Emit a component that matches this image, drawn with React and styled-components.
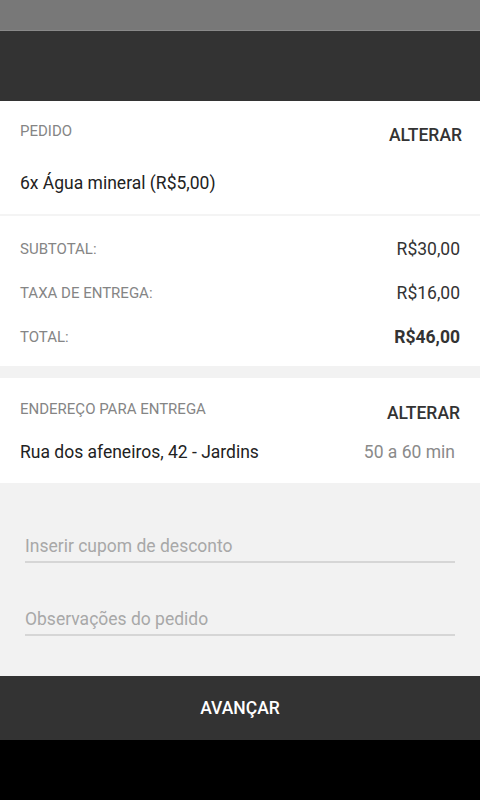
import React from 'react';
import styled, { createGlobalStyle } from 'styled-components';

const GlobalStyle = createGlobalStyle`
  html, body { margin: 0; padding: 0; }
  body { font-family: Roboto, "Noto Sans", Arial, sans-serif; background: #000; }
  * { box-sizing: border-box; }
`;

const Screen = styled.div`
  width: 480px;
  height: 800px;
  display: flex;
  flex-direction: column;
  background: #f2f2f2;
`;

const StatusBar = styled.div`
  height: 31px;
  background: #787878;
  border-bottom: 1px solid #8a8a8a;
`;

const AppBar = styled.div`
  height: 70px;
  background: #333333;
`;

const Section = styled.div`
  background: #fff;
  padding: ${(p) => p.$pad || '0'};
  border-bottom: ${(p) => (p.$divider ? '2px solid #f4f4f4' : 'none')};
  margin-bottom: ${(p) => p.$gap || 0}px;
`;

const Header = styled.div`
  display: flex;
  justify-content: space-between;
  align-items: flex-start;
  padding-right: ${(p) => p.$right || 0}px;
`;

const Label = styled.span`
  font-size: 15px;
  line-height: 16px;
  color: #858585;
  text-transform: uppercase;
`;

const Action = styled.button`
  margin-top: 2px;
  padding: 0;
  border: 0;
  background: none;
  font-family: inherit;
  font-size: 17.5px;
  line-height: 20px;
  font-weight: 500;
  color: #333;
`;

const Line = styled.div`
  display: flex;
  justify-content: space-between;
  margin-top: ${(p) => p.$top}px;
  font-size: 17.5px;
  line-height: 20px;
  color: #222;
`;

const Muted = styled.span`
  color: #8a8a8a;
  padding-right: 5px;
`;

const TotalRow = styled.div`
  height: 44px;
  display: flex;
  align-items: center;
  justify-content: space-between;
  padding-right: 20px;
`;

const Value = styled.span`
  font-size: 17.5px;
  color: #333;
  font-weight: ${(p) => (p.$bold ? 700 : 400)};
`;

const Form = styled.div`
  flex: 1;
  padding: 48px 25px 0 25px;
  display: flex;
  flex-direction: column;
  gap: 41px;
`;

const Field = styled.input`
  width: 430px;
  height: 32px;
  padding: 0;
  border: 0;
  border-bottom: 2px solid #d6d6d6;
  background: transparent;
  font-family: inherit;
  font-size: 17.5px;
  color: #333;
  outline: none;
  &::placeholder { color: #a8a8a8; }
`;

const NextButton = styled.button`
  height: 64px;
  border: 0;
  background: #333333;
  color: #fff;
  font-family: inherit;
  font-size: 17.5px;
  font-weight: 500;
`;

const NavBar = styled.div`
  height: 60px;
  background: #000;
`;

export default function App() {
  const totals = [
    { label: 'Subtotal:', value: 'R$30,00' },
    { label: 'Taxa de entrega:', value: 'R$16,00' },
    { label: 'Total:', value: 'R$46,00', bold: true },
  ];
  return (
    <Screen>
      <GlobalStyle />
      <StatusBar />
      <AppBar />
      <Section $pad="22px 0 21px 20px" $divider>
        <Header $right={18}>
          <Label>Pedido</Label>
          <Action>ALTERAR</Action>
        </Header>
        <Line $top={28}>6x Água mineral (R$5,00)</Line>
      </Section>
      <Section $pad="11px 0 7px 20px" $gap={12}>
        {totals.map((t) => (
          <TotalRow key={t.label}>
            <Label>{t.label}</Label>
            <Value $bold={t.bold}>{t.value}</Value>
          </TotalRow>
        ))}
      </Section>
      <Section $pad="23px 20px 21px 20px">
        <Header>
          <Label>Endereço para entrega</Label>
          <Action>ALTERAR</Action>
        </Header>
        <Line $top={19}>
          <span>Rua dos afeneiros, 42 - Jardins</span>
          <Muted>50 a 60 min</Muted>
        </Line>
      </Section>
      <Form>
        <Field placeholder="Inserir cupom de desconto" />
        <Field placeholder="Observações do pedido" />
      </Form>
      <NextButton>AVANÇAR</NextButton>
      <NavBar />
    </Screen>
  );
}
